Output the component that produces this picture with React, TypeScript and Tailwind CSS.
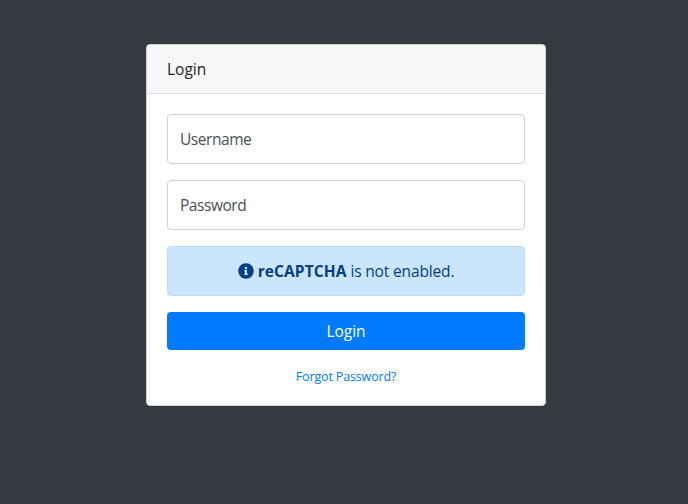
import React from "react";
import { FaInfoCircle } from "react-icons/fa";

function Field({ label, type }: { label: string; type: string }) {
  return (
    <input
      type={type}
      placeholder={label}
      aria-label={label}
      className="mb-4 block h-[50px] w-full rounded-[4px] border border-[#ced4da] bg-white px-3 text-[15.5px] tracking-[-0.45px] text-[#495057] placeholder:text-[#495057] placeholder:opacity-100"
    />
  );
}

export default function App() {
  return (
    <div className="flex min-h-screen items-start bg-[#343a40] pt-11 pl-[146px] font-['Open_Sans','Noto_Sans',sans-serif] text-[15.5px] leading-6 text-[#212529]">
      <div className="w-[400px] overflow-hidden rounded-[4px] border border-[#d0d1d2] bg-white">
        <div className="border-b border-[#dfdfdf] bg-[#f7f7f7] px-5 py-3">Login</div>
        <div className="px-5 pt-5 pb-[18px]">
          <Field label="Username" type="text" />
          <Field label="Password" type="password" />
          <div className="mb-4 flex h-[50px] items-center justify-center gap-1 rounded-[4px] border border-[#b8daff] bg-[#cce5ff] text-[#004085]">
            <FaInfoCircle className="size-4" />
            <span className="tracking-[-0.15px]">
              <strong className="tracking-[0.1px]">reCAPTCHA</strong> is not enabled.
            </span>
          </div>
          <button className="block h-[38px] w-full rounded-[4px] bg-[#007bff] text-white">Login</button>
          <a href="#" className="mt-[17px] block text-center text-[12.5px] leading-5 tracking-[-0.15px] text-[#007bff]">Forgot Password?</a>
        </div>
      </div>
    </div>
  );
}
